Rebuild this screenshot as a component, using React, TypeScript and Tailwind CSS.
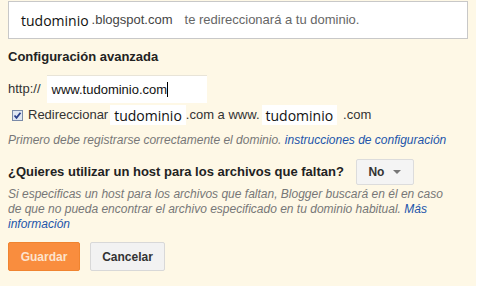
import React from 'react';

const arial = { fontFamily: '"Liberation Sans", Arial, sans-serif' };

const App: React.FC = () => {
  return (
    <div className="flex w-[492px] h-[286px] bg-white overflow-hidden" style={arial}>
      <div className="w-[476px] h-full shrink-0 bg-[#fef8e6] px-2 pt-px text-[13px] text-[#222]">
        {/* Top domain box */}
        <div className="w-[460px] h-[38px] bg-white border border-[#c8c8c8] flex items-center pl-3">
          <span className="text-[14px] text-[#111] font-['Open_Sans',sans-serif]">tudominio</span>
          <span className="ml-[3px] text-[#444]">.blogspot.com</span>
          <span className="ml-3 text-[#666]">te redireccionará a tu dominio.</span>
        </div>

        {/* Advanced config */}
        <h2 className="mt-[10px] font-bold text-[13px] text-[#222] leading-4">Configuración avanzada</h2>

        <div className="mt-[10px] flex items-center">
          <span className="text-[#333]">http://</span>
          <div className="ml-[6px] w-[160px] h-[28px] bg-white border-t border-[#e8e4d8] flex items-center pl-[5px]">
            <span className="text-[#111]">www.tudominio.com</span>
            <span className="w-px h-[15px] bg-black" />
          </div>
        </div>

        <div className="mt-[2px] h-[20px] flex items-center">
          <span className="ml-1 w-[11px] h-[11px] border border-[#7a8aa8] bg-[#dfe6f2] flex items-center justify-center">
            <svg width="9" height="9" viewBox="0 0 9 9">
              <path d="M1.5 4.5 L3.5 6.8 L7.5 1.8" stroke="#2a3f8a" strokeWidth="1.8" fill="none" />
            </svg>
          </span>
          <span className="ml-[5px] text-[#333]">Redireccionar</span>
          <span className="ml-[2px] h-[20px] bg-white flex items-center px-[4px] text-[14px] text-[#111] font-['Open_Sans',sans-serif]">tudominio</span>
          <span className="text-[#333]">.com a www.</span>
          <span className="ml-[2px] h-[20px] bg-white flex items-center px-[4px] text-[14px] text-[#111] font-['Open_Sans',sans-serif]">tudominio</span>
          <span className="ml-[6px] text-[#333]">.com</span>
        </div>

        <p className="mt-[8px] italic text-[12px] text-[#777] leading-[15px] whitespace-nowrap">
          Primero debe registrarse correctamente el dominio.{' '}
          <a className="text-[#2255aa]">instrucciones de configuración</a>
        </p>

        <div className="mt-[11px] flex items-center">
          <span className="font-bold text-[13px] text-[#222]">¿Quieres utilizar un host para los archivos que faltan?</span>
          <button className="ml-[12px] h-[26px] w-[58px] bg-[#f4f4f4] border border-[#dcdcdc] rounded-[2px] flex items-center justify-center gap-[9px] text-[12px] font-bold text-[#333]">
            No
            <svg width="8" height="4" viewBox="0 0 8 4">
              <path d="M0 0 L8 0 L4 4 Z" fill="#777" />
            </svg>
          </button>
        </div>

        <p className="mt-[2px] italic text-[12px] text-[#777] leading-[15px] w-[445px]">
          Si especificas un host para los archivos que faltan, Blogger buscará en él en caso de que no pueda encontrar el archivo especificado en tu dominio habitual.{' '}
          <a className="text-[#2255aa]">Más información</a>
        </p>

        <div className="mt-[10px] flex gap-[10px]">
          <button className="w-[72px] h-[29px] bg-[#f98d3e] border border-[#f08430] rounded-[2px] text-[#fde3cd] font-bold text-[12px]">
            Guardar
          </button>
          <button className="w-[75px] h-[29px] bg-[#f2f2f2] border border-[#d8d8d8] rounded-[2px] text-[#333] font-bold text-[12px]">
            Cancelar
          </button>
        </div>
      </div>
    </div>
  );
};

export default App;
